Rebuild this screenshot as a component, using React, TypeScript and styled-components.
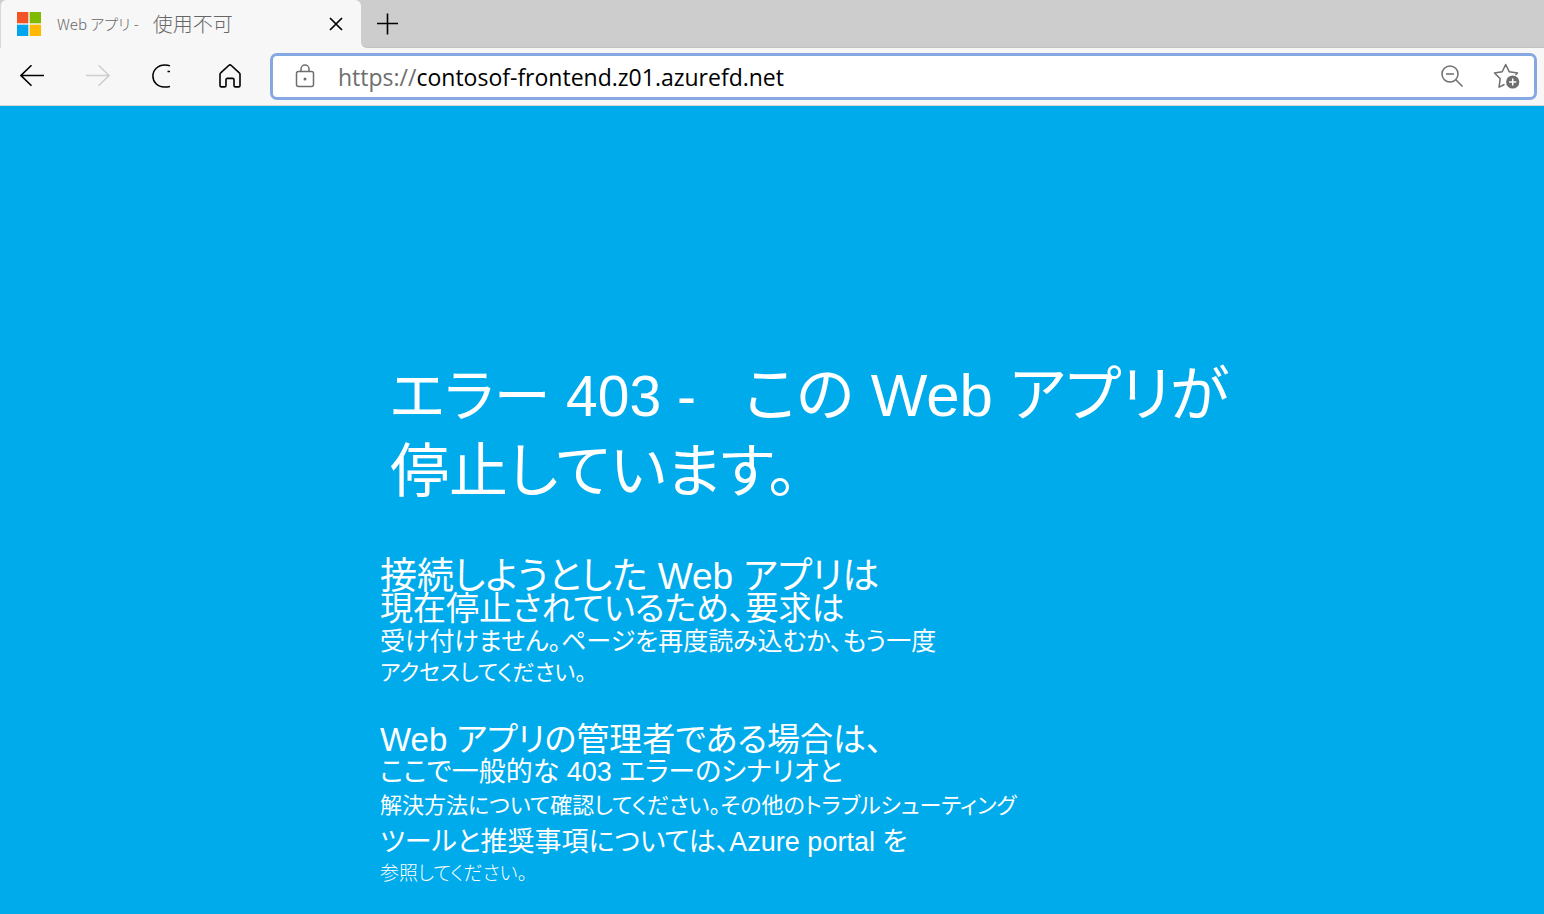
import React from "react";
import styled, { createGlobalStyle } from "styled-components";

const GlobalStyle = createGlobalStyle`
  * { box-sizing: border-box; }
  body { margin: 0; background: #00abec; }
  h1, p { margin: 0; font-weight: 400; }
  button { border: 0; padding: 0; background: none; color: inherit; cursor: pointer; }
  svg { display: block; fill: none; }
`;

const Browser = styled.div`
  min-height: 100vh;
  display: flex;
  flex-direction: column;
  color: #000;
  font-family: "Liberation Sans", "Noto Sans CJK JP", sans-serif;
`;

const TabStrip = styled.header`
  display: flex;
  height: 48px;
  background: #f7f7f7;
`;

const Tab = styled.div`
  display: flex;
  align-items: center;
  width: 361px;
  height: 100%;
  padding: 0 11px 0 16px;
  border-left: 1px solid #d8d8d8;
  border-radius: 6px 6px 0 0;
  background: #f7f7f7;
`;

const TabBackdrop = styled.div`
  background: #cdcdcd;
`;

const TabTitle = styled.span`
  flex: 1;
  display: flex;
  align-items: center;
  gap: 14px;
  margin-left: 16px;
  color: #666;
  font-family: "Noto Sans CJK JP", sans-serif;
  font-size: 15px;
  font-weight: 300;
  line-height: 24px;
  white-space: pre;
  font-feature-settings: "palt";
`;

const TabStatus = styled.span`
  font-size: 20px;
`;

const StripRest = styled.div`
  flex: 1;
  display: flex;
  align-items: center;
  padding-left: 12px;
  border-bottom: 1px solid #c2c2c2;
  border-bottom-left-radius: 6px;
  background: #cdcdcd;
`;

const Toolbar = styled.nav`
  display: flex;
  align-items: center;
  height: 58px;
  padding: 0 7px 1px 18px;
  border-bottom: 1px solid #d4d4d4;
  background: #f7f7f7;
`;

const ToolButtons = styled.div`
  display: flex;
  gap: 38px;
  margin-right: 26px;
`;

const IconButton = styled.button<{ $tone?: string }>`
  display: grid;
  place-items: center;
  width: 28px;
  height: 28px;
  color: ${(p) => p.$tone ?? "#000"};

  &:disabled { cursor: default; }
`;

const AddressBar = styled.div`
  flex: 1;
  display: flex;
  align-items: center;
  height: 47px;
  padding: 0 13px 0 18px;
  border: 3px solid #86a8e2;
  border-radius: 7px;
  background: #fff;
`;

const UrlLabel = styled.label`
  flex: 1;
  display: flex;
  align-items: center;
  margin-left: 19px;
  padding-top: 2px;
  color: #6e6e6e;
  font-family: "Open Sans", "Noto Sans", sans-serif;
  font-size: 23px;
  line-height: 32px;
`;

const UrlInput = styled.input`
  flex: 1;
  min-width: 0;
  padding: 0;
  border: 0;
  outline: 0;
  background: none;
  color: #000;
  font: inherit;
`;

const AddressActions = styled.div`
  display: flex;
  gap: 27px;
`;

const Page = styled.main`
  flex: 1;
  display: grid;
  grid-template-columns: 380fr 1164fr;
  align-content: start;
  padding: 252px 0 24px;
  background: #00abec;
  color: #fff;
`;

const Message = styled.article`
  grid-column: 2;
  display: grid;
  gap: 51px;
  white-space: pre;
  font-feature-settings: "palt";
`;

const Heading = styled.h1`
  padding-left: 10px;
`;

const Paragraph = styled.p`
  & + & { margin-top: -16px; }
`;

const Line = styled.span<{ $size: number; $height?: number; $weight?: number }>`
  display: block;
  font-size: ${(p) => p.$size}px;
  line-height: ${(p) => p.$height ?? 32}px;
  font-weight: ${(p) => p.$weight ?? 400};
`;

const Larger = styled.span`
  font-size: 60px;
`;

const MicrosoftLogo = () => (
  <svg width="24" height="24" viewBox="0 0 24 24" aria-hidden="true">
    <path fill="#f35325" d="M0 0h11.3v11.3H0z" />
    <path fill="#7fba00" d="M12.7 0H24v11.3H12.7z" />
    <path fill="#00a4ef" d="M0 12.7h11.3V24H0z" />
    <path fill="#ffb900" d="M12.7 12.7H24V24H12.7z" />
  </svg>
);

const CloseIcon = () => (
  <svg width="14" height="14" viewBox="0 0 14 14" stroke="currentColor" strokeWidth="1.7">
    <path d="M1 1l12 12M13 1L1 13" />
  </svg>
);

const PlusIcon = () => (
  <svg width="22" height="22" viewBox="0 0 22 22" stroke="currentColor" strokeWidth="1.6">
    <path d="M11.500 0.5v21M1 10.500h21" />
  </svg>
);

const ArrowIcon = ({ forward = false }: { forward?: boolean }) => (
  <svg width="24" height="22" viewBox="0 0 24 22" stroke="currentColor" strokeWidth="1.6">
    {forward ? <path d="M0 10.500h23M12.5 0.3L23 10.500 12.5 20.7" /> : <path d="M24 10.500H1M11.5 0.3L1 10.500l10.5 10.2" />}
  </svg>
);

const ReloadIcon = () => (
  <svg width="24" height="24" viewBox="0 0 24 24" stroke="currentColor" strokeWidth="1.5">
    <path d="M18 1.900C16.500 1.200 14.800 1 12.700 1 6 1 .9 5.800 .9 12s4.600 11 11.300 11c2.300 0 4-.2 5.800-.6M15.500 7.500H18" />
  </svg>
);

const HomeIcon = () => (
  <svg width="24" height="24" viewBox="0 0 24 24" stroke="currentColor" strokeWidth="1.6" strokeLinejoin="round">
    <path d="M2 10.200c0-.6.200-1 .7-1.400l8-7.300a2 2 0 0 1 2.600 0l8 7.300c.5.400.7.800.7 1.400v11.300c0 .8-.6 1.400-1.400 1.400h-3.200c-.8 0-1.400-.6-1.400-1.400v-5.700c0-.8-.6-1.400-1.400-1.400H9.400c-.8 0-1.400.6-1.400 1.400v5.700c0 .8-.6 1.400-1.400 1.400H3.400c-.8 0-1.400-.6-1.400-1.400z" />
  </svg>
);

const LockIcon = () => (
  <svg width="20" height="24" viewBox="0 0 20 24" stroke="currentColor" strokeWidth="1.5">
    <rect x="1.500" y="7.500" width="17" height="15" rx="2" />
    <path d="M6 7.500V5a4 4 0 0 1 8 0v2.500" />
    <circle cx="10" cy="15" r="1.500" fill="currentColor" stroke="none" />
  </svg>
);

const ZoomOutIcon = () => (
  <svg width="24" height="24" viewBox="0 0 24 24" stroke="currentColor" strokeWidth="1.500">
    <circle cx="10" cy="10" r="8" />
    <path d="M6 10h8M15.800 15.800l6.700 6.700" />
  </svg>
);

const AddFavoriteIcon = () => (
  <svg width="28" height="26" viewBox="0 0 28 26" stroke="currentColor" strokeWidth="1.500" strokeLinejoin="round">
    <path d="M11.500 21.500L6 24.200l1.200-8.400L1.500 10l7.700-1.200L12.700 1.500l3.600 7.300 8.200 1.200-2 2" />
    <circle cx="19.700" cy="19" r="6.600" fill="currentColor" stroke="none" />
    <path stroke="#fff" d="M19.700 15.400v7.200M16.100 19h7.200" />
  </svg>
);

export default function App() {
  return (
    <Browser>
      <GlobalStyle />
      <TabStrip>
        <TabBackdrop>
          <Tab>
            <MicrosoftLogo />
            <TabTitle>
              <span>Web アプリ -</span>
              <TabStatus>使用不可</TabStatus>
            </TabTitle>
            <IconButton aria-label="タブを閉じる"><CloseIcon /></IconButton>
          </Tab>
        </TabBackdrop>
        <StripRest>
          <IconButton aria-label="新しいタブ"><PlusIcon /></IconButton>
        </StripRest>
      </TabStrip>
      <Toolbar>
        <ToolButtons>
          <IconButton aria-label="戻る"><ArrowIcon /></IconButton>
          <IconButton aria-label="進む" disabled $tone="#cfcfcf"><ArrowIcon forward /></IconButton>
          <IconButton aria-label="更新"><ReloadIcon /></IconButton>
          <IconButton aria-label="ホーム"><HomeIcon /></IconButton>
        </ToolButtons>
        <AddressBar>
          <IconButton aria-label="サイト情報" $tone="#6e6e6e"><LockIcon /></IconButton>
          <UrlLabel>
            https://
            <UrlInput aria-label="アドレス" defaultValue="contosof-frontend.z01.azurefd.net" />
          </UrlLabel>
          <AddressActions>
            <IconButton aria-label="縮小" $tone="#6e6e6e"><ZoomOutIcon /></IconButton>
            <IconButton aria-label="お気に入りに追加" $tone="#6e6e6e"><AddFavoriteIcon /></IconButton>
          </AddressActions>
        </AddressBar>
      </Toolbar>
      <Page>
        <Message>
          <Heading>
            <Line $size={57} $height={76}>エラー 403 -{"  "}<Larger> この Web アプリが</Larger></Line>
            <Line $size={59} $height={76}>停止しています。</Line>
          </Heading>
          <Paragraph>
            <Line $size={37}>接続しようとした Web アプリは</Line>
            <Line $size={33}>現在停止されているため、要求は</Line>
            <Line $size={25}>受け付けません。ページを再度読み込むか、もう一度</Line>
            <Line $size={22}>アクセスしてください。</Line>
          </Paragraph>
          <Paragraph>
            <Line $size={33}>Web アプリの管理者である場合は、</Line>
            <Line $size={27}>ここで一般的な 403 エラーのシナリオと</Line>
            <Line $size={22} $height={36}>解決方法について確認してください。その他のトラブルシューティング</Line>
            <Line $size={27} $height={36}>ツールと推奨事項については、Azure portal を</Line>
            <Line $size={19} $height={28} $weight={300}>参照してください。</Line>
          </Paragraph>
        </Message>
      </Page>
    </Browser>
  );
}
